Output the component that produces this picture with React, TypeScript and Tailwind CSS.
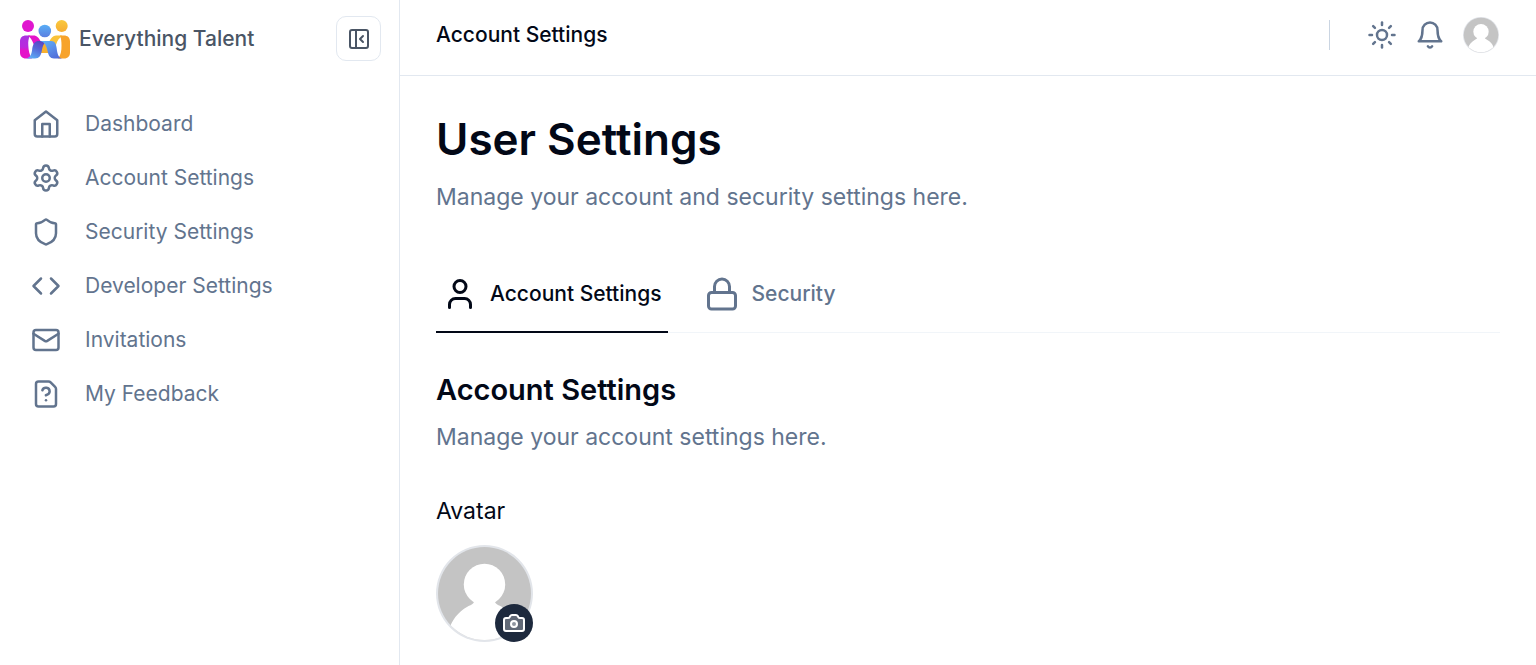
import { useState } from 'react';
import {
  Camera,
  Code,
  FileQuestionMark,
  Lock,
  Mail,
  PanelLeftClose,
  Settings,
  Shield,
  Sun,
  User,
  type LucideIcon,
} from 'lucide-react';

type IconProps = { className?: string };

function HomeIcon({ className }: IconProps) {
  return (
    <svg viewBox="0 0 24 24" fill="none" stroke="currentColor" strokeWidth="2" strokeLinecap="round" strokeLinejoin="round" className={className} aria-hidden="true">
      <path d="m3 9 9-7 9 7v11a2 2 0 0 1-2 2H5a2 2 0 0 1-2-2z" />
      <path d="M9 22V12h6v10" />
    </svg>
  );
}

function BellIcon({ className }: IconProps) {
  return (
    <svg viewBox="0 0 24 24" fill="none" stroke="currentColor" strokeWidth="2" strokeLinecap="round" strokeLinejoin="round" className={className} aria-hidden="true">
      <path d="M6 8a6 6 0 0 1 12 0c0 7 3 9 3 9H3s3-2 3-9" />
      <path d="M10.3 21a1.94 1.94 0 0 0 3.4 0" />
    </svg>
  );
}

function Logo() {
  return (
    <svg viewBox="0 0 50 40" className="h-10 w-[50px] shrink-0" aria-hidden="true">
      <defs>
        <linearGradient id="logo-head" x1="0" y1="0" x2="0" y2="1">
          <stop offset="0" stopColor="#58aef6" />
          <stop offset="1" stopColor="#5b7fe0" />
        </linearGradient>
        <linearGradient id="logo-left" x1="0.8" y1="0" x2="0.2" y2="1">
          <stop offset="0" stopColor="#5b3fc0" />
          <stop offset="0.45" stopColor="#5668d8" />
          <stop offset="1" stopColor="#5eb4f8" />
        </linearGradient>
        <linearGradient id="logo-right" x1="0.1" y1="0" x2="0.8" y2="1">
          <stop offset="0" stopColor="#5eb0f7" />
          <stop offset="0.5" stopColor="#5a8ee8" />
          <stop offset="1" stopColor="#4f6ad8" />
        </linearGradient>
        <linearGradient id="logo-pink" x1="0" y1="0" x2="0" y2="1">
          <stop offset="0" stopColor="#a834e0" />
          <stop offset="0.5" stopColor="#b92ade" />
          <stop offset="0.65" stopColor="#e414c9" />
          <stop offset="1" stopColor="#e414c9" />
        </linearGradient>
        <linearGradient id="logo-gold" x1="0" y1="0" x2="0" y2="1">
          <stop offset="0" stopColor="#f9c93e" />
          <stop offset="1" stopColor="#f7ad32" />
        </linearGradient>
      </defs>
      <circle cx="8" cy="7" r="6" fill="#e016cf" />
      <circle cx="24.800" cy="12" r="6.300" fill="url(#logo-head)" />
      <circle cx="41.700" cy="7" r="6" fill="url(#logo-gold)" />
      <path d="M6 16.500h4c-1.500 3-2 6-1.700 10 .3 5 1 9.500 3.700 13H6c-4 0-6-2.500-6-6V22.500c0-4 2.500-6 6-6Z" fill="url(#logo-pink)" />
      <path d="M8 16.500h5.500c3.500 0 5.500 2.500 7 5.500-3 1-5 2.500-6 5-1.500-3-2.500-6.500-5-9Z" fill="#e414c9" />
      <path d="M21 24h8v10h-9z" fill="#f7b02e" />
      <path d="M42 16.500h-6c-3 0-5 2.500-6.500 5.500 3 .5 5 2.500 6 5.500 1-3.500 2-7 5-9Z" fill="#f9c23a" />
      <path d="M40 16.500h4c3.500 0 6 2 6 6v11c0 3.500-2 6-6 6h-6c3-3.500 3.500-8 3.500-13 0-4-.3-7-1.500-10Z" fill="#f7a32c" />
      <path d="M17.500 22H27c-3.500 2-4.500 6-5.200 10-.8 4.500-2.500 7.500-6.800 7.500H5.500c5-.5 6-4.500 6.600-8.500.6-4.500 1.500-8 5.400-9Z" fill="url(#logo-left)" />
      <path d="M20.500 22h10.700c4 0 5 3.500 5.500 7.500.6 5 1.500 9 5.300 10h-8c-4 0-5.500-3-6.300-7-1-5-2.500-9-7.200-10.500Z" fill="url(#logo-right)" />
    </svg>
  );
}

function Avatar({ className }: IconProps) {
  return (
    <svg viewBox="0 0 96 96" className={className} role="img" aria-label="Profile picture">
      <defs>
        <clipPath id="avatar-clip">
          <circle cx="48" cy="48" r="46" />
        </clipPath>
      </defs>
      <circle cx="48" cy="48" r="48" fill="#e2e5ea" />
      <g clipPath="url(#avatar-clip)">
        <rect width="96" height="96" fill="#c4c4c4" />
        <circle cx="48" cy="39" r="20.500" fill="#fff" />
        <path d="M38 54h20c0 4 2 5 7 7 9 4 14 12 16 19v16H13V84c2-9 9-18 18-23 5-2 7-3 7-7Z" fill="#fff" />
      </g>
    </svg>
  );
}

const navItems: { label: string; icon: LucideIcon | typeof HomeIcon }[] = [
  { label: 'Dashboard', icon: HomeIcon },
  { label: 'Account Settings', icon: Settings },
  { label: 'Security Settings', icon: Shield },
  { label: 'Developer Settings', icon: Code },
  { label: 'Invitations', icon: Mail },
  { label: 'My Feedback', icon: FileQuestionMark },
];

const tabs = [
  { label: 'Account Settings', icon: User },
  { label: 'Security', icon: Lock },
];

export default function App() {
  const [active, setActive] = useState(0);

  return (
    <div className="flex min-h-screen bg-white font-['Inter','Liberation_Sans',sans-serif] text-[#020817]">
      <aside className="w-[400px] shrink-0 border-r border-slate-200">
        <div className="flex items-center justify-between pt-4 pr-[18px] pl-5">
          <a href="#" className="flex items-center gap-[9px] text-[21px] leading-8 font-medium text-gray-600">
            <Logo />
            Everything Talent
          </a>
          <button type="button" aria-label="Collapse sidebar" className="flex size-[45px] items-center justify-center rounded-[10px] border border-slate-200 text-gray-600">
            <PanelLeftClose className="size-6" />
          </button>
        </div>
        <nav aria-label="Main" className="mt-[39px] flex flex-col gap-[6px] px-[31px]">
          {navItems.map(({ label, icon: Icon }) => (
            <a key={label} href="#" className="flex h-12 items-center gap-6 text-[21px] leading-8 text-slate-500">
              <Icon className="size-[30px]" />
              {label}
            </a>
          ))}
        </nav>
      </aside>

      <div className="min-w-0 flex-1">
        <header className="flex h-[76px] items-center justify-between border-b border-slate-200 pr-[37px] pb-[5px] pl-9">
          <div className="text-[21px] leading-8 font-medium">Account Settings</div>
          <div className="flex items-center text-slate-500">
            <div className="mr-[37px] h-[30px] w-px bg-slate-300" />
            <button type="button" aria-label="Toggle theme">
              <Sun className="size-[30px]" />
            </button>
            <button type="button" aria-label="Notifications" className="ml-[18px]">
              <BellIcon className="size-[30px]" />
            </button>
            <button type="button" aria-label="Account menu" className="ml-[18px]">
              <Avatar className="size-9" />
            </button>
          </div>
        </header>

        <main className="px-9 pt-9">
          <h1 className="text-[44px] leading-[54px] font-semibold">User Settings</h1>
          <p className="mt-[13px] text-[23px] leading-9 text-slate-500">Manage your account and security settings here.</p>

          <div role="tablist" className="mt-10 flex border-b border-slate-100">
            {tabs.map(({ label, icon: Icon }, i) => (
              <button
                key={label}
                type="button"
                role="tab"
                aria-selected={active === i}
                onClick={() => setActive(i)}
                className={
                  active === i
                    ? 'mr-[30px] -mb-px flex h-[78px] items-center gap-3 border-b-2 border-[#020817] px-[6px] pt-[2px] text-[21px] leading-8 font-medium'
                    : 'mr-[30px] -mb-px flex h-[78px] items-center gap-3 border-b-2 border-transparent px-[6px] pt-[2px] text-[21px] leading-8 font-medium text-slate-500'
                }
              >
                <Icon className="size-9" />
                {label}
              </button>
            ))}
          </div>

          <section className="pt-9 pb-5">
            <h2 className="text-[29px] leading-[42px] font-semibold">Account Settings</h2>
            <p className="mt-2 text-[23px] leading-9 text-slate-500">Manage your account settings here.</p>
            <h3 className="mt-10 text-[23px] leading-8">Avatar</h3>
            <div className="relative mt-[18px] size-[97px]">
              <Avatar className="size-full" />
              <button type="button" aria-label="Change avatar" className="absolute right-0 bottom-0 flex size-[38px] items-center justify-center rounded-full bg-slate-800 text-white">
                <Camera className="size-6 fill-white/30" />
              </button>
            </div>
          </section>
        </main>
      </div>
    </div>
  );
}
